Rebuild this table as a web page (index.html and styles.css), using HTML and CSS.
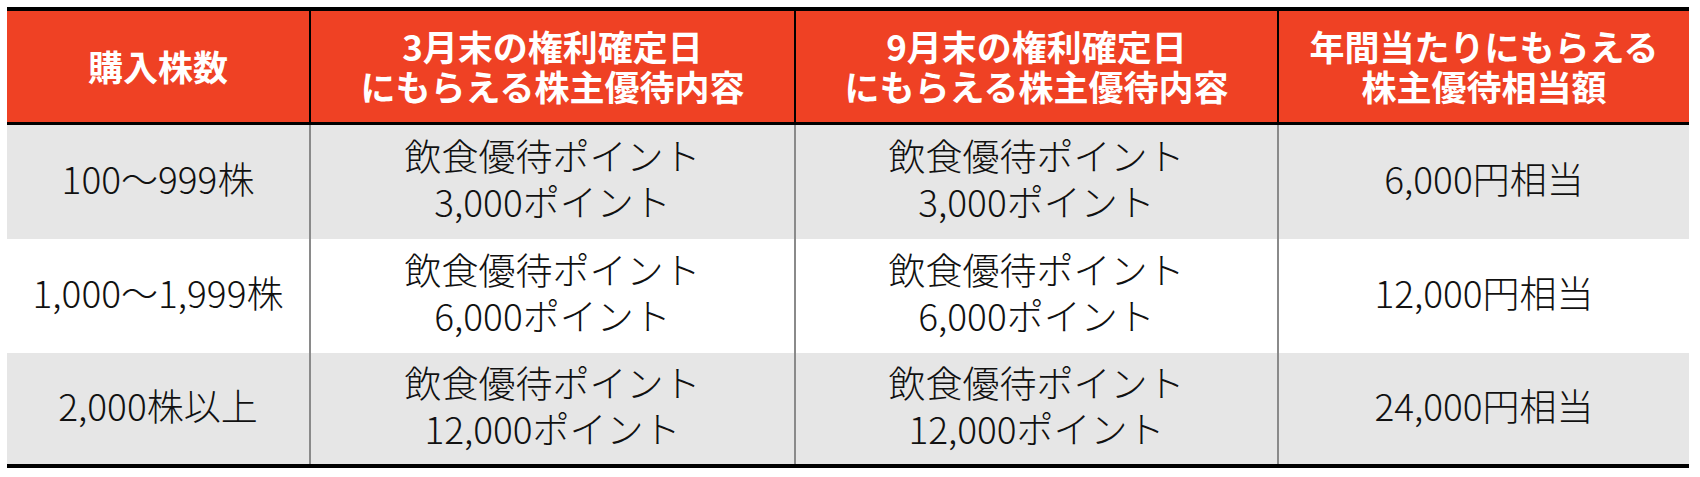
FILE: index.html
```html
<!DOCTYPE html>
<html lang="ja">
<head>
<meta charset="utf-8">
<link rel="stylesheet" href="styles.css">
</head>
<body>
<div class="wrap">
<table class="perks">
<colgroup>
<col class="c1"><col class="c2"><col class="c3"><col class="c4">
</colgroup>
<thead>
<tr>
<th>購入株数</th>
<th>3月末の権利確定日<br>にもらえる株主優待内容</th>
<th>9月末の権利確定日<br>にもらえる株主優待内容</th>
<th>年間当たりにもらえる<br>株主優待相当額</th>
</tr>
</thead>
<tbody>
<tr class="shade">
<td>100～999株</td>
<td>飲食優待ポイント<br>3,000ポイント</td>
<td>飲食優待ポイント<br>3,000ポイント</td>
<td>6,000円相当</td>
</tr>
<tr>
<td>1,000～1,999株</td>
<td>飲食優待ポイント<br>6,000ポイント</td>
<td>飲食優待ポイント<br>6,000ポイント</td>
<td>12,000円相当</td>
</tr>
<tr class="shade">
<td>2,000株以上</td>
<td>飲食優待ポイント<br>12,000ポイント</td>
<td>飲食優待ポイント<br>12,000ポイント</td>
<td>24,000円相当</td>
</tr>
</tbody>
</table>
</div>
</body>
</html>
```

FILE: styles.css
```css
html, body {
  margin: 0;
  padding: 0;
  background: #ffffff;
}
.wrap {
  padding: 7px 11px 10px 7px;
}
.perks {
  width: 1682px;
  table-layout: fixed;
  border-collapse: separate;
  border-spacing: 0;
  font-family: "Noto Sans CJK JP", "Noto Sans", sans-serif;
  border-top: 4px solid #000;
  border-bottom: 4px solid #000;
}
.c1 { width: 302px; }
.c2 { width: 485px; }
.c3 { width: 483px; }
.c4 { width: 412px; }
.perks th {
  box-sizing: border-box;
  background: #ef4124;
  color: #ffffff;
  font-size: 35px;
  font-weight: 700;
  line-height: 40px;
  height: 114px;
  padding: 0 0 2px;
  text-align: center;
  vertical-align: middle;
  border-bottom: 3px solid #000;
}
.perks th + th {
  border-left: 2px solid #000;
}
.perks td {
  box-sizing: border-box;
  color: #111;
  font-size: 37px;
  font-weight: 300;
  line-height: 46px;
  height: 114px;
  padding: 0 0 8px;
  text-align: center;
  vertical-align: middle;
}
.perks td + td {
  border-left: 2px solid #8a8a8a;
}
.perks tr:last-child td {
  height: 111px;
}
.shade td {
  background: #e6e6e6;
}
```
